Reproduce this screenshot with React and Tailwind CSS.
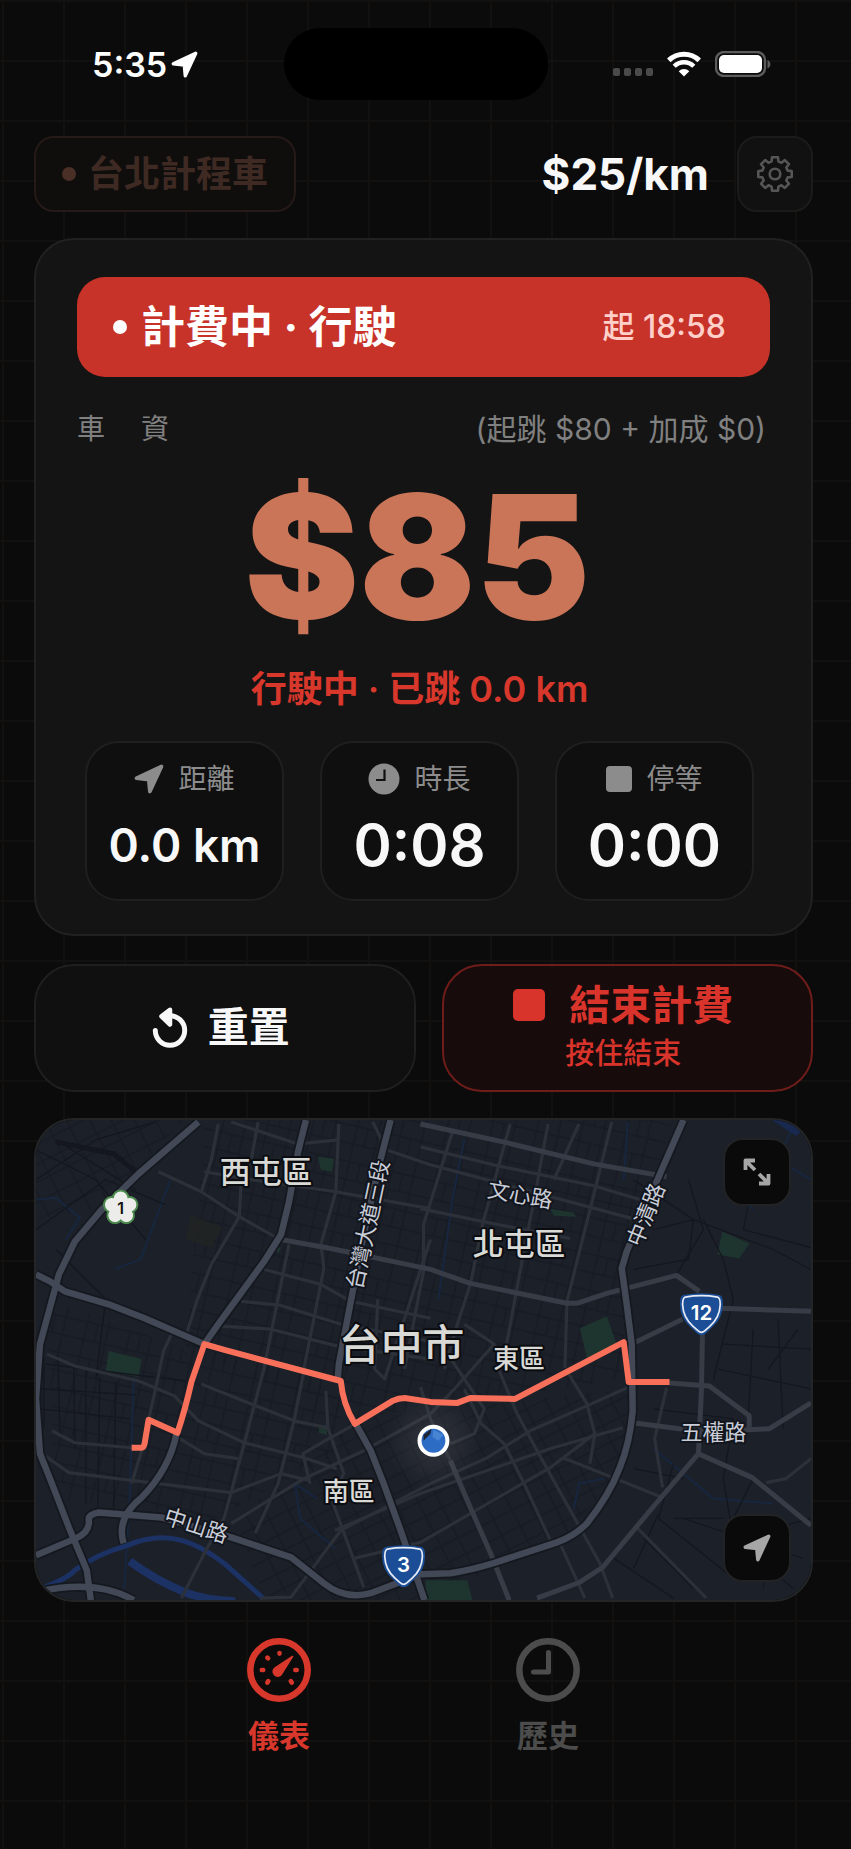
import React, { useState } from 'react';

const LocationIcon = ({ className }) => (
  <svg viewBox="0 0 24 24" className={className} fill="currentColor" stroke="currentColor" strokeWidth="3" strokeLinejoin="round" aria-hidden="true">
    <path d="M22 2 2 11.3 11.800 12.500 12.700 22Z" />
  </svg>
);

const WifiIcon = () => (
  <svg viewBox="0 0 34 26" className="h-[26px] w-[34px]" fill="none" stroke="currentColor" strokeWidth="5" aria-hidden="true">
    <path d="M1.8 9.4a21.8 21.8 0 0 1 30.4 0" />
    <path d="M7.2 15.2a14 14 0 0 1 19.6 0" strokeWidth="4.4" />
    <path d="M17 25.4 11.7 20.2a7.6 7.6 0 0 1 10.6 0Z" fill="currentColor" stroke="none" />
  </svg>
);

const BatteryIcon = () => (
  <svg viewBox="0 0 56 26" className="h-[26px] w-14" aria-hidden="true">
    <rect x="1" y="1" width="49" height="24" rx="8" fill="none" stroke="#5c5c5c" strokeWidth="2.400" />
    <rect x="4" y="4" width="43" height="18" rx="5" fill="#fff" />
    <path d="M52.500 9a4.6 4.6 0 0 1 0 8.500Z" fill="#5c5c5c" />
  </svg>
);

// Eight teeth around the circle, each one a small trapezoid
const gearPoints = Array.from({ length: 8 }, (_, i) =>
  [
    [-15, 13],
    [-10, 17],
    [10, 17],
    [15, 13]
  ].map(([offset, radius]) => {
    const angle = ((i * 45 + offset - 90) * Math.PI) / 180;
    return `${(20 + radius * Math.cos(angle)).toFixed(1)},${(20 + radius * Math.sin(angle)).toFixed(1)}`;
  })
)
  .flat()
  .join(' ');

const GearIcon = () => (
  <svg viewBox="0 0 40 40" className="size-10" fill="none" stroke="currentColor" strokeWidth="2.6" strokeLinejoin="round" aria-hidden="true">
    <polygon points={gearPoints} />
    <circle cx="20" cy="20" r="5.3" />
  </svg>
);

const ClockSolidIcon = () => (
  <svg viewBox="0 0 32 32" className="size-8" aria-hidden="true">
    <circle cx="16" cy="16" r="15.500" fill="currentColor" />
    <path d="M16.500 6.500v10.500H8" fill="none" stroke="#101010" strokeWidth="2.200" />
  </svg>
);

const StopIcon = ({ className }) => (
  <svg viewBox="0 0 32 32" className={className} fill="currentColor" aria-hidden="true">
    <rect width="32" height="32" rx="5" />
  </svg>
);

const ResetIcon = () => (
  <svg viewBox="0 0 36 42" className="h-[42px] w-9" fill="none" stroke="currentColor" strokeWidth="5" strokeLinecap="round" strokeLinejoin="round" aria-hidden="true">
    <path d="M3.300 23.500A14.700 14.700 0 1 0 18 8.800h-4" />
    <path d="M18 2.800 9.500 9.400 18 17.500Z" fill="currentColor" strokeWidth="4.500" />
  </svg>
);

const ExpandIcon = () => (
  <svg viewBox="0 0 28 28" className="size-7" fill="none" stroke="currentColor" strokeWidth="3.800" strokeLinejoin="round" aria-hidden="true">
    <path d="M2.500 12V2.500H12M2.500 2.500 12 12M25.500 16v9.500H16M25.500 25.500 16 16" />
  </svg>
);

const GaugeIcon = () => (
  <svg viewBox="0 0 64 64" className="size-16" fill="none" stroke="currentColor" strokeLinecap="round" aria-hidden="true">
    <circle cx="32" cy="32" r="28.700" strokeWidth="6.500" />
    <path d="M32.500 15v.6M20.300 19.600l.8.8M14.800 32h1.400M20.300 44.600l1-1.400M44.800 44.600l-1-1.400M48.300 32h1.400" strokeWidth="4.600" />
    <path d="M45.500 18.500 34.500 36.200a4.600 4.600 0 1 1-6.400-6.400Z" fill="currentColor" strokeWidth="1.500" strokeLinejoin="round" />
  </svg>
);

const HistoryIcon = () => (
  <svg viewBox="0 0 64 64" className="size-16" fill="none" stroke="currentColor" strokeLinecap="round" strokeLinejoin="round" aria-hidden="true">
    <circle cx="32" cy="32" r="28.700" strokeWidth="6.500" />
    <path d="M32.500 14.500v19.500H17.500" strokeWidth="5" />
  </svg>
);

const minorStreets = [
  'M0 60 60 20 120 2M0 110 70 60 130 85M20 20 100 70M0 30 60 60 110 120M20 130 70 180 60 260',
  'M10 245 150 262M5 270 100 276M4 290 95 300M8 310 8 240M22 236 24 315M38 246 39 330M50 250 50 385M64 258 62 390M80 262 78 395',
  'M600 60 660 100 740 130 778 150M655 60 670 110 640 160M670 100 690 140 700 180 680 260M720 60 710 110 778 128',
  'M620 110 660 100 655 140 600 150M690 225 778 230M685 250 778 270M720 210 715 300M745 200 750 310M765 210 735 250',
  'M620 290 700 300 690 360M640 345 625 400 700 460M650 400 770 440M690 360 700 420 760 470M720 360 700 400M600 350 650 360',
  'M610 420 660 470M580 440 640 480M625 395 600 450M640 400 690 400M700 420 778 400M740 400 730 470'
];

const localRoads = [
  'M123 52 166 72 204 97 243 119',
  'M183 4 176 40 166 72',
  'M204 97 176 145 162 180 151 215M136 215 128 232 120 270 106 332 96 365',
  'M196 2 263 24 304 20M169 52 230 62 301 72 396 89',
  'M229 150 286 165 316 182 396 199M206 182 245 186 306 205 396 222',
  'M186 207 236 210 303 227 396 240',
  'M304 4 301 72 286 125 289 149 279 199 269 249',
  'M254 125 243 179 229 249 209 325 189 399 169 435 146 480',
  'M223 2 216 40 206 62 204 97',
  'M338 2 352 30 396 45 599 99',
  'M386 27 459 45 560 66 620 84M386 89 449 102 536 119',
  'M476 4 449 102 436 165 423 205 410 250M514 4 500 80 486 152 473 222 464 249',
  'M418 12 389 105 389 152 370 250M578 2 559 79 533 182 531 249',
  'M545 4 520 60M396 120 350 260 340 250 343 180',
  'M11 235 39 247 103 262 139 277 163 302 209 324 269 339 302 350',
  'M16 312 39 324 96 329M9 337 33 354 196 374 246 355 275 362',
  'M269 252 259 302 243 365 220 415M166 265 216 285 259 302 293 309',
  'M143 319 169 335 203 340M196 405 269 360 329 332 396 295',
  'M225 480 256 479 306 412 396 365 453 339 496 312 553 287 593 269',
  'M291 272 293 309 309 355 296 379 313 425 329 469M275 365 268 335 290 322 321 305',
  'M300 412 386 375 516 330 589 309M320 440 386 424 516 349 561 315',
  'M464 249 483 295 503 332 566 445 579 480M526 425 551 480',
  'M533 252 553 285 561 315 556 345M529 339 629 379M633 269 621 320 629 369',
  'M603 409 673 480M733 364 753 360 778 340M430 270 447 305 470 325 490 365 520 430',
  'M410 230 430 260 450 290 440 315 416 325M396 295 420 270 460 225 430 205M386 268 396 300 416 342'
];

const mainRoads = [
  'M246 120 296 129 396 150 436 164 533 184 543 184 573 174 643 156 666 172',
  'M598 225 649 200M669 215 668 272 665 335M636 264 676 267 716 297 716 311',
  'M599 304 646 310 714 311 736 310 778 284M665 335 619 389 569 449 546 464 503 480',
  'M665 335 719 359 778 407M386 4 469 22 560 44 633 57M416 342 436 389 458 439 475 482M686 189 778 192'
];

const arterials = [
  'M163 2 103 54 66 90 39 122 23 155 13 192 4 225 0 280 4 335 16 365 33 409 51 452 55 482',
  'M0 155 14 162 29 172 73 185 109 199 169 225',
  'M271 0 263 32 254 82 246 115 229 142 183 205 169 225',
  'M356 0 346 39 330 110 316 182 304 245 303 259',
  'M321 305 336 332 349 365 366 412 390 482',
  'M650 0 626 55 593 132 588 149 593 185 598 225 599 292Q596 325 586 349 576 376 553 405 540 418 523 424L459 445Q436 452 416 455L386 456 336 475Q310 482 289 465L256 439 196 419 126 399 63 394Q52 396 53 402 54 414 40 420L0 437',
  'M141 315Q134 350 106 379 80 400 88 425M0 474Q60 460 98 482'
];

const placeNames = [
  { name: '西屯區', x: 231, y: 63, size: 31 },
  { name: '北屯區', x: 485, y: 136, size: 31 },
  { name: '台中市', x: 367, y: 241, size: 42 },
  { name: '東區', x: 485, y: 249, size: 26 },
  { name: '南區', x: 314, y: 382, size: 26 }
];

const streetNames = [
  { name: '台灣大道三段', x: 333, y: 105, angle: -78 },
  { name: '文心路', x: 486, y: 75, angle: 10 },
  { name: '中清路', x: 612, y: 95, angle: -68 },
  { name: '五權路', x: 680, y: 313, angle: 0 },
  { name: '中山路', x: 161, y: 407, angle: 18 }
];

const RouteShield = ({ x, y, number }) => (
  <g transform={`translate(${x} ${y}) scale(1.08)`}>
    <path d="M-17-18Q0-21 17-18 20-17 20-10 20 4 10 12L4 18Q0 21-4 18L-10 12Q-20 4-20-10-20-17-17-18Z" fill="#1b4e96" />
    <path d="M-15-16Q0-18.500 15-16 17.500-15 17.500-9 17 3 8 11L3 15.500Q0 18-3 15.500L-8 11Q-17 3-17.500-9-17.500-15-15-16Z" fill="none" stroke="#e8ecf4" strokeWidth="1.600" />
    <text y="5" textAnchor="middle" fontSize="19" fontWeight="600" fill="#fff">{number}</text>
  </g>
);

const CityMap = () => (
  <svg viewBox="0 0 778 482" className="block h-auto w-full" role="img" aria-label="台中市">
    <defs>
      <pattern id="blocks" width="44" height="36" patternUnits="userSpaceOnUse" patternTransform="rotate(13)">
        <path d="M0 6H44M0 24H44M8 0V36M30 0V36M19 6V24" stroke="#161a22" strokeWidth="1.300" />
      </pattern>
      <pattern id="blocksSouth" width="40" height="34" patternUnits="userSpaceOnUse" patternTransform="rotate(-27)">
        <path d="M0 6H40M0 22H40M8 0V34M27 0V34" stroke="#161a22" strokeWidth="1.300" />
      </pattern>
      <radialGradient id="halo">
        <stop offset="0" stopColor="#8b8b8b" stopOpacity="0.2" />
        <stop offset="1" stopColor="#8b8b8b" stopOpacity="0" />
      </radialGradient>
    </defs>
    <rect width="778" height="482" fill="#1c2029" />
    <path d="M170 0H640L590 150 590 260 320 300 150 230Z" fill="url(#blocks)" />
    <path d="M10 180 150 230 300 260 310 330 180 400 20 380Z" fill="url(#blocks)" />
    <path d="M320 300 595 270 590 350 520 430 380 482H230L200 400Z" fill="url(#blocksSouth)" />
    <path d="M0 0H150L60 90 0 100Z" fill="url(#blocksSouth)" />

    <g fill="#1e352f">
      <path d="M73 232 106 240 103 258 70 252ZM546 209 573 197 583 225 553 239ZM689 112 716 124 706 139 684 135ZM283 37 299 39 297 52 286 50Z" />
      <path d="M391 462H433L438 482H391ZM240 128h6l-3 6ZM284 308l8-2v10l-8-2Z" />
      <path d="M516 89 540 93 542 97 520 96Z" />
    </g>
    <path d="M155 95 187 108 176 128 150 120Z" fill="#23261f" opacity="0.600" />
    <g fill="none" stroke="#17263f" strokeWidth="2">
      <path d="M0 80 20 78 44 98 30 120M135 60 105 140 78 150M590 60 594 2M404 180 418 80 430 20M700 20 692 60 720 90M778 60 745 40 763 0" />
      <path d="M98 262 94 380 88 480M282 380 260 365 265 400 300 430M540 390 545 365 570 360M620 330 680 380 740 385" />
    </g>
    <path d="M739 0 763 16 770 10 764 0Z" fill="#18284f" />

    <g fill="none" stroke="#14171f" strokeWidth="1.300">
      {minorStreets.map((d) => <path key={d} d={d} />)}
    </g>
    <path d="M20 22 78 34 100 52" fill="none" stroke="#14171f" strokeWidth="5" />
    <g fill="none" stroke="#1c3264">
      <path d="M0 472Q30 462 39 452 60 436 92 427 120 415 146 422 165 427 190 446L228 480" strokeWidth="5" />
      <path d="M94 443Q120 462 149 474 170 482 200 483" strokeWidth="8" />
    </g>
    <g fill="none" stroke="#2c3038" strokeWidth="3.200" strokeLinejoin="round">
      {localRoads.map((d) => <path key={d} d={d} />)}
    </g>
    <g fill="none" stroke="#383c47" strokeWidth="5" strokeLinejoin="round">
      {mainRoads.map((d) => <path key={d} d={d} />)}
    </g>
    <g fill="none" strokeLinejoin="round">
      {arterials.map((d) => <path key={d} d={d} stroke="#15181f" strokeWidth="10" />)}
      {arterials.map((d) => <path key={d} d={d} stroke="#434856" strokeWidth="6.500" />)}
    </g>

    <circle cx="399" cy="322" r="48" fill="url(#halo)" />
    <path
      d="M96 329H106Q108 329 109 325L113 301 142 314Q150 290 156 263L169 225 190 231 306 262Q308 285 320 305L358 282Q364 279 370 279L396 283 423 284 436 279 481 280 590 223 595 263H636"
      fill="none"
      stroke="#f9705a"
      strokeWidth="6"
      strokeLinejoin="round"
    />
    <circle cx="399" cy="322" r="14" fill="#2c6cc4" stroke="#fff" strokeWidth="4" />
    <path d="M389 316 397 310 396 315 389 322Z" fill="#1a2433" />
    <path d="M399 311 409 316 404 322 398 318Z" fill="#4884d4" />

    <g textAnchor="middle" fontWeight="500" fill="#d9d9d6" stroke="#0b0c10" strokeWidth="4" strokeLinejoin="round" paintOrder="stroke">
      {placeNames.map(({ name, x, y, size }) => (
        <text key={name} x={x} y={y} fontSize={size}>{name}</text>
      ))}
    </g>
    <g textAnchor="middle" fontSize="22" fill="#c9cdd8" stroke="#12151c" strokeWidth="4" strokeLinejoin="round" paintOrder="stroke">
      {streetNames.map(({ name, x, y, angle }) => (
        <text key={name} y="8" transform={`translate(${x} ${y}) rotate(${angle})`}>{name}</text>
      ))}
    </g>

    <g transform="translate(85 88)">
      {['#4b8a4c', '#ecedea'].map((fill, layer) => (
        <g key={fill} fill={fill}>
          {[0, 72, 144, 216, 288].map((turn) => (
            <circle key={turn} cy="-9.500" r={layer === 0 ? 8.8 : 6.8} transform={`rotate(${turn})`} />
          ))}
          <circle r="8" />
        </g>
      ))}
      <text y="6" textAnchor="middle" fontSize="16" fontWeight="600" fill="#111">1</text>
    </g>
    <RouteShield x={668} y={195} number="12" />
    <RouteShield x={369} y={448} number="3" />
  </svg>
);

const StatTile = ({ icon, label, value, valueClass }) => (
  <div className="flex flex-col items-center rounded-[34px] border-2 border-[#1f1f1f] bg-[#0f0f0f] pt-5 pb-6">
    <div className="flex h-8 items-center gap-[14px] text-[28px] text-[#8c8c8c]">
      {icon}
      <span>{label}</span>
    </div>
    <div className={`mt-5 leading-[60px] font-semibold whitespace-nowrap text-[#f8f8f8] ${valueClass}`}>{value}</div>
  </div>
);

const StatusBar = () => (
  <div className="grid h-[72px] grid-cols-[1fr_264px_1fr] items-center pr-5 text-white">
    <div className="flex items-center gap-1 pl-[92px]">
      <span className="text-[34px] font-semibold">5:35</span>
      <LocationIcon className="size-[27px]" />
    </div>
    <div className="h-full rounded-[36px] bg-black" />
    <div className="flex items-center justify-end pr-[60px]">
      <div className="mt-4 mr-[14px] flex gap-1">
        {[0, 1, 2, 3].map((dot) => (
          <span key={dot} className="h-2 w-[7px] rounded-xs bg-[#4a4a4a]" />
        ))}
      </div>
      <WifiIcon />
      <div className="ml-[14px]">
        <BatteryIcon />
      </div>
    </div>
  </div>
);

const mapButton =
  'absolute right-5 flex size-[68px] items-center justify-center rounded-[20px] border-2 border-[#222325] bg-[#0a0a0a] text-[#a6a6a6]';

const App = () => {
  const [tab, setTab] = useState('meter');

  const tabs = [
    { id: 'meter', label: '儀表', icon: <GaugeIcon /> },
    { id: 'history', label: '歷史', icon: <HistoryIcon /> }
  ];

  return (
    <div className="min-h-screen bg-[#0b0b0b] bg-[linear-gradient(to_right,#12110f_2px,transparent_2px),linear-gradient(to_bottom,#12110f_2px,transparent_2px)] bg-size-[61px_60px] bg-position-[2px_0px] pt-7 font-['Inter','Noto_Sans_CJK_TC',sans-serif]">
      <StatusBar />

      <main className="pr-[38px] pl-[34px]">
        <header className="mt-9 flex h-[76px] items-stretch">
          <button type="button" className="flex items-center gap-3 rounded-[20px] border-2 border-[#251a17] bg-[#0f0e0d] px-[26px] text-[36px] font-bold text-[#3f2a23]">
            <span className="size-[14px] rounded-full bg-[#4a2f27]" />
            台北計程車
          </button>
          <div className="ml-auto flex items-center text-[44px] font-bold text-[#f8f8f8]">$25/km</div>
          <button type="button" aria-label="設定" className="ml-7 flex w-[76px] items-center justify-center rounded-[20px] border-2 border-[#1c1b1a] bg-[#111] text-[#555]">
            <GearIcon />
          </button>
        </header>

        <section className="mt-[26px] rounded-[40px] border-2 border-[#212121] bg-[#141414] px-[41px] pt-[37px] pb-[33px]">
          <div className="flex h-[100px] items-center justify-between rounded-[28px] bg-[#c73329] pr-11 pl-9">
            <div className="flex items-center gap-[14px] text-[44px] font-bold text-white">
              <span className="size-[14px] rounded-full bg-white" />
              計費中 · 行駛
            </div>
            <div className="text-[32px] font-medium text-[#ffd0ca]">起 18:58</div>
          </div>

          <div className="mt-8 flex justify-between pr-1 text-[28px] leading-10 text-[#808080]">
            <span className="whitespace-pre">車　 資</span>
            <span className="text-[30px]">(起跳 $80 + 加成 $0)</span>
          </div>

          <div className="mt-[23px] pr-3 text-center text-[172px] leading-[168px] font-black text-[#cb7558]">$85</div>
          <div className="mt-[29px] pr-2 text-center text-[36px] leading-10 font-semibold text-[#d8372c]">行駛中 · 已跳 0.0 km</div>

          <div className="mt-8 grid grid-cols-3 gap-9 pr-4 pl-2">
            <StatTile icon={<LocationIcon className="size-[30px]" />} label="距離" value="0.0 km" valueClass="text-[46px]" />
            <StatTile icon={<ClockSolidIcon />} label="時長" value="0:08" valueClass="text-[58px]" />
            <StatTile icon={<StopIcon className="size-[26px]" />} label="停等" value="0:00" valueClass="text-[58px]" />
          </div>
        </section>

        <div className="mt-7 grid h-32 grid-cols-[38fr_37fr] gap-[26px]">
          <button type="button" className="flex items-center justify-center gap-5 rounded-[40px] border-2 border-[#1f1f1f] bg-[#101010] pr-2 text-[41px] font-bold text-[#f8f8f8]">
            <ResetIcon />
            重置
          </button>
          <button type="button" className="flex flex-col items-center justify-center rounded-[40px] border-2 border-[#6e1d1a] bg-[#180b0b] pr-2 text-[#d8342b]">
            <span className="flex items-center gap-6 text-[41px] leading-[52px] font-bold">
              <StopIcon className="size-8" />
              結束計費
            </span>
            <span className="text-[29px] leading-[46px] font-medium">按住結束</span>
          </button>
        </div>

        <section className="relative mt-[26px] overflow-hidden rounded-[40px] border-2 border-[#242527]">
          <CityMap />
          <button type="button" aria-label="放大地圖" className={`${mapButton} top-[18px]`}>
            <ExpandIcon />
          </button>
          <button type="button" aria-label="目前位置" className={`${mapButton} bottom-[18px]`}>
            <LocationIcon className="size-7" />
          </button>
        </section>
      </main>

      <nav className="mt-9 flex justify-center gap-[205px] pr-6 pb-24">
        {tabs.map(({ id, label, icon }) => (
          <button
            key={id}
            type="button"
            onClick={() => setTab(id)}
            className={`flex flex-col items-center gap-4 text-[31px] leading-9 font-semibold ${tab === id ? 'text-[#d8372c]' : 'text-[#4c4c4c]'}`}
          >
            {icon}
            {label}
          </button>
        ))}
      </nav>
    </div>
  );
};

export default App;
